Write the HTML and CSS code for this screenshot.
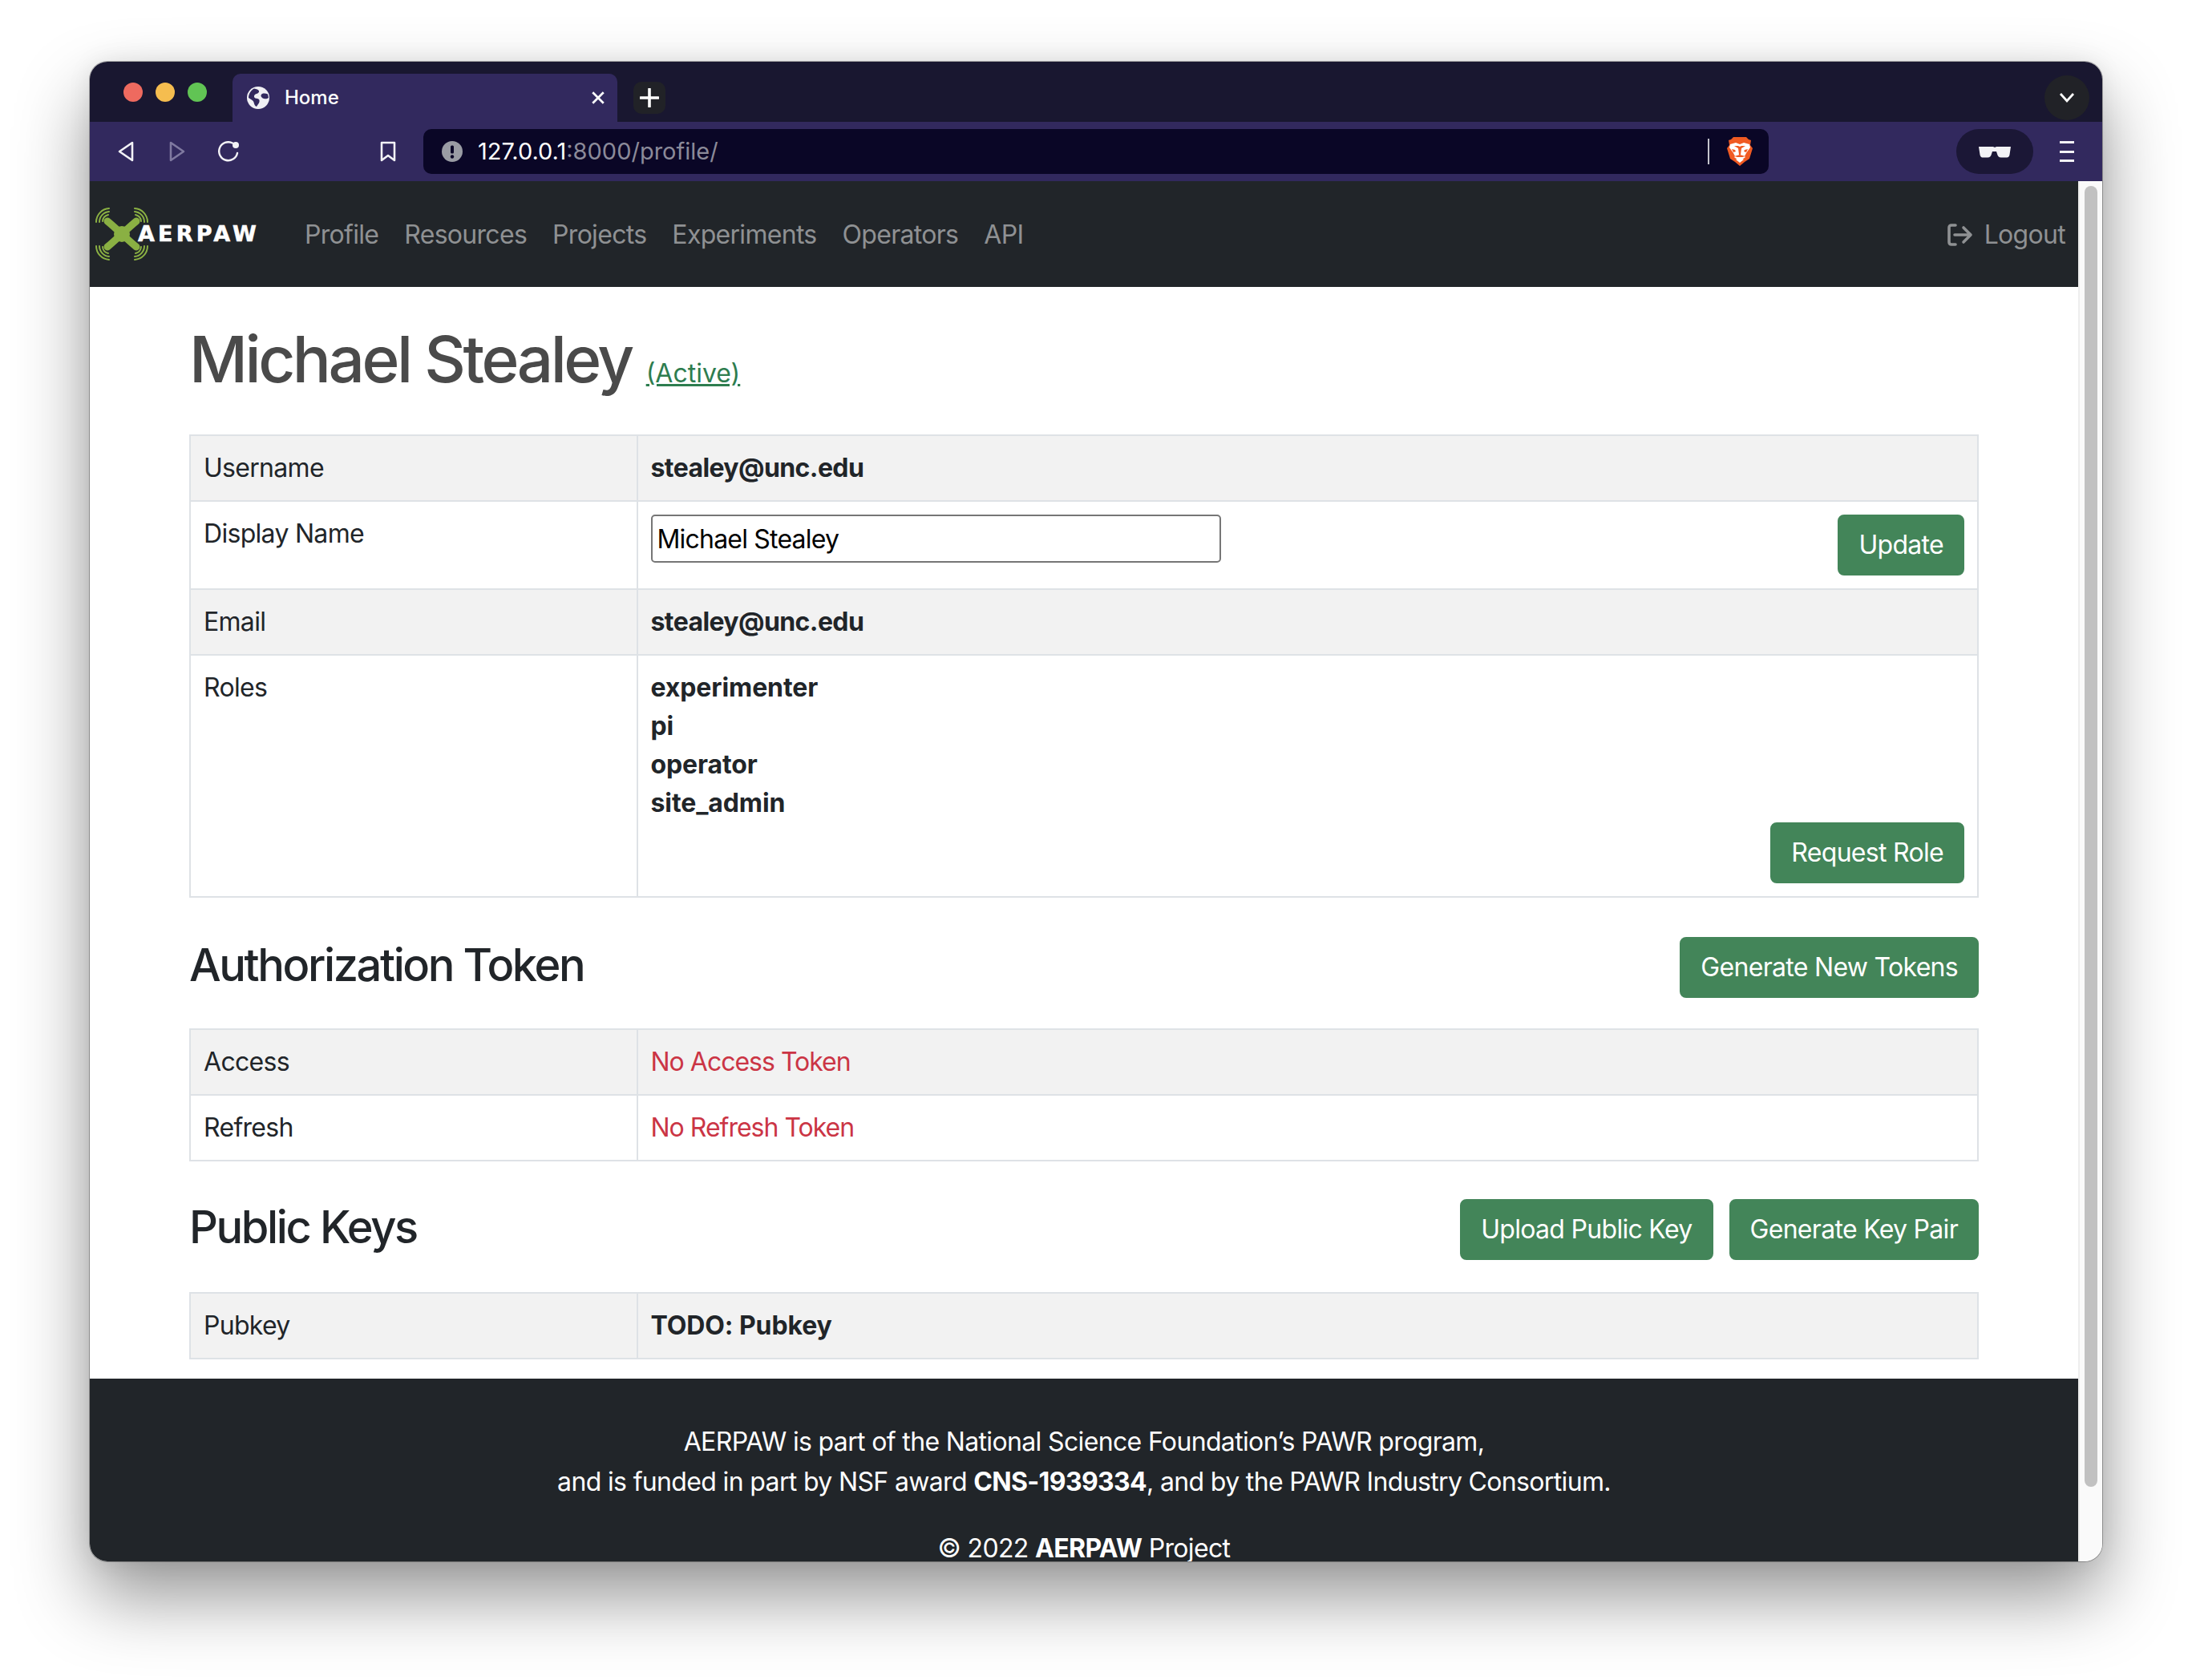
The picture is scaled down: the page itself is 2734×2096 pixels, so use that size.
FILE: index.html
```html
<!DOCTYPE html>
<html lang="en">
<head>
<meta charset="utf-8">
<title>Home</title>
<link rel="stylesheet" href="styles.css">
</head>
<body>
<div class="window">
  <div class="tabstrip">
    <span class="light red"></span><span class="light yellow"></span><span class="light green"></span>
    <div class="tab">
      <svg class="globe" viewBox="0 0 28 28"><circle cx="14" cy="14" r="14" fill="#f0f0f4"/><path d="M9 2.500c3 .5 5 1 6 3 .6 1.400-1 3-3 3.500-2 .6-3.500 2-3 4 .3 1.300 2 1.800 4 2 2 .3 3 2 2.500 4-.4 2-2 3.500-3.500 6-2-.5-3-3-3.500-5.500C8 17.500 5 16 2 14c0-5 3-9.500 7-11.500z" fill="#32295e"/><path d="M19 9c2-.6 4.500-.6 7 .5l1 4.500c-2 1.500-4 1.500-6 1-2-.6-3.500-2-3.500-3.500 0-1.200.5-2 1.500-2.500z" fill="#32295e"/></svg>
      <span class="tab-title">Home</span>
      <svg class="tab-x" viewBox="0 0 16 16"><path d="M2 2l12 12M14 2L2 14" stroke="#fff" stroke-width="2.400" fill="none"/></svg>
    </div>
    <div class="newtab"><svg viewBox="0 0 24 24"><path d="M12 1v22M1 12h22" stroke="#fff" stroke-width="3.600" fill="none" stroke-linecap="round"/></svg></div>
    <div class="chevron"><svg viewBox="0 0 20 14"><path d="M2 2l8 9 8-9" stroke="#fff" stroke-width="2.800" fill="none"/></svg></div>
  </div>
  <div class="toolbar">
    <svg class="tb-back" viewBox="0 0 20 26"><path d="M18 2v22L2 13z" stroke="#f2f2f6" stroke-width="2.600" fill="none" stroke-linejoin="round"/></svg>
    <svg class="tb-forward" viewBox="0 0 20 26"><path d="M2 2v22l16-11z" stroke="#7f79a0" stroke-width="2.600" fill="none" stroke-linejoin="round"/></svg>
    <svg class="tb-reload" viewBox="0 0 26 26"><path d="M18 2.500A11.500 11.500 0 1 0 24 15" stroke="#f2f2f6" stroke-width="2.400" fill="none" stroke-linecap="round"/><circle cx="22" cy="5" r="4" fill="#f2f2f6"/></svg>
    <svg class="tb-bookmark" viewBox="0 0 20 26"><path d="M2 2h16v22l-8-6-8 6z" stroke="#f2f2f6" stroke-width="2.600" fill="none" stroke-linejoin="round"/></svg>
    <div class="address">
      <svg class="alert" viewBox="0 0 26 26"><circle cx="13" cy="13" r="13" fill="#9a9ca4"/><rect x="11" y="5.500" width="4" height="10" rx="1.500" fill="#0a0626"/><circle cx="13" cy="19.500" r="2.200" fill="#0a0626"/></svg>
      <span class="url"><span class="url-host">127.0.0.1</span><span class="url-rest">:8000/profile/</span></span>
      <span class="addr-divider"></span>
      <svg class="brave" viewBox="0 0 32 36"><path d="M8 0h16l3 3 3 1-1 6 3 4-4 13-6 4-6 5-6-5-6-4L0 14l3-4-1-6 3-1z" fill="#f05a22"/><path d="M4 9l7-2 5 2 5-2 7 2 1 4-5 7-2 4 1 1-4 3h-6l-4-3 1-1-2-4-5-7z" fill="#fff"/><path d="M9 11h5l2 1 2-1h5l-5 3-1 8h-2l-1-8z" fill="#f05a22"/><path d="M6 15l4 1 1 2-3 1zM26 15l-4 1-1 2 3 1z" fill="#f05a22"/><path d="M9 24l7-2 7 2-4 1h-6z" fill="#f05a22"/><path d="M11 28l5-2 5 2-5 4z" fill="#fff"/></svg>
    </div>
    <div class="shades"><svg viewBox="0 0 40 15"><path d="M0 1h17c1 0 2 0 3 1 1-1 2-1 3-1h17l-1.500 10c-.3 2-1.500 3.500-3.500 3.500h-7c-3 0-4.500-2-5-4.500l-1-3h-5l-1 3c-.5 2.500-2 4.500-5 4.500H4.500C3 14.500 2 13 1.500 11z" fill="#f2f2f6"/></svg></div>
    <div class="menu"><span></span><span></span><span></span></div>
  </div>
  <div class="viewport">
    <div class="page">
      <nav class="navbar">
        <a class="brand">
          <svg class="drone" viewBox="0 0 66 66">
            <g fill="none" stroke="#8ab043" stroke-linecap="round">
              <path d="M15 17C26 26 40 40 51 49M51 17C40 26 26 40 15 49" stroke-width="9"/>
              <g stroke-width="2">
                <path d="M1 18A17 17 0 0 1 17 1M49 1A17 17 0 0 1 65 18M1 48A17 17 0 0 0 17 65M49 65A17 17 0 0 0 65 48"/>
                <path d="M5 18A13 13 0 0 1 17 5M49 5A13 13 0 0 1 61 18M5 48A13 13 0 0 0 17 61M49 61A13 13 0 0 0 61 48"/>
                <path d="M9 17A9 9 0 0 1 16 9M50 9A9 9 0 0 1 57 17M9 49A9 9 0 0 0 16 57M50 57A9 9 0 0 0 57 49"/>
              </g>
            </g>
            <circle cx="33" cy="33" r="10" fill="#8ab043"/>
          </svg>
          <span class="brand-text">AERPAW</span>
        </a>
        <a class="nav-link">Profile</a>
        <a class="nav-link">Resources</a>
        <a class="nav-link">Projects</a>
        <a class="nav-link">Experiments</a>
        <a class="nav-link">Operators</a>
        <a class="nav-link">API</a>
        <a class="nav-link logout">
          <svg class="logout-icon" viewBox="0 0 32 28"><path d="M10 2H5C3 2 2 3 2 5v18c0 2 1 3 3 3h5" stroke="#8f9193" stroke-width="3.600" fill="none" stroke-linecap="round"/><path d="M9 14h20M20 5l9 9-9 9" stroke="#8f9193" stroke-width="3.600" fill="none" stroke-linecap="round" stroke-linejoin="round"/></svg>
          Logout
        </a>
      </nav>
      <main class="content">
        <h1 class="title">Michael Stealey <a class="status">(Active)</a></h1>
        <table class="info">
          <tr class="odd"><td class="label">Username</td><td class="strong tight">stealey@unc.edu</td></tr>
          <tr>
            <td class="label">Display Name</td>
            <td><div class="name-row"><input class="name-input" type="text" value="Michael Stealey"><button class="btn">Update</button></div></td>
          </tr>
          <tr class="odd"><td class="label">Email</td><td class="strong tight">stealey@unc.edu</td></tr>
          <tr>
            <td class="label">Roles</td>
            <td class="strong">experimenter<br>pi<br>operator<br>site_admin
              <div class="role-row"><button class="btn">Request Role</button></div>
            </td>
          </tr>
        </table>
        <div class="section-head">
          <h2 class="section-title">Authorization Token</h2>
          <div class="actions"><button class="btn">Generate New Tokens</button></div>
        </div>
        <table class="info">
          <tr class="odd"><td class="label">Access</td><td class="danger">No Access Token</td></tr>
          <tr><td class="label">Refresh</td><td class="danger">No Refresh Token</td></tr>
        </table>
        <div class="section-head keys-head">
          <h2 class="section-title">Public Keys</h2>
          <div class="actions"><button class="btn">Upload Public Key</button><button class="btn">Generate Key Pair</button></div>
        </div>
        <table class="info">
          <tr class="odd"><td class="label">Pubkey</td><td class="strong">TODO: Pubkey</td></tr>
        </table>
      </main>
      <footer class="footer">
        <p class="foot-p">AERPAW is part of the National Science Foundation’s PAWR program,<br>and is funded in part by NSF award <b>CNS-1939334</b>, and by the PAWR Industry Consortium.</p>
        <p class="foot-copy">© 2022 <b>AERPAW</b> Project</p>
      </footer>
    </div>
    <div class="scrollbar"><div class="thumb"></div></div>
  </div>
</div>
</body>
</html>
```

FILE: styles.css
```css
* { box-sizing: border-box; }
html, body { margin: 0; padding: 0; background: #fff; }
body {
  width: 2734px;
  height: 2096px;
  padding: 77px 112px 0;
  overflow: hidden;
  font-family: Inter, "Liberation Sans", sans-serif;
  font-size: 32px;
  line-height: 48px;
  letter-spacing: -0.7px;
  color: #212529;
}
.window {
  width: 2510px;
  height: 1871px;
  border-radius: 22px;
  overflow: hidden;
  display: flex;
  flex-direction: column;
  box-shadow: 0 0 0 1px rgba(0,0,0,.28), 0 44px 90px rgba(0,0,0,.42), 0 0 30px rgba(0,0,0,.08);
}
.tabstrip {
  height: 75px;
  flex: none;
  background: #191730;
  display: flex;
  align-items: flex-start;
  padding-left: 42px;
}
.light { width: 24px; height: 24px; border-radius: 50%; margin-top: 26px; margin-right: 16px; flex: none; }
.red { background: #ee6a5f; }
.yellow { background: #f5bd4f; }
.green { background: #61c454; margin-right: 32px; }
.tab {
  width: 480px;
  height: 60px;
  margin-top: 15px;
  background: #32295e;
  border-radius: 10px 10px 0 0;
  display: flex;
  align-items: center;
  padding: 0 14px 0 18px;
}
.globe { width: 28px; height: 28px; flex: none; }
.tab-title { font-size: 24px; font-weight: 500; letter-spacing: 0; color: #fff; margin-left: 19px; flex: 1; line-height: 28px; }
.tab-x { width: 18px; height: 18px; margin-right: 1px; }
.newtab {
  width: 40px;
  height: 40px;
  margin: 25px 0 0 20px;
  background: #212227;
  border-radius: 10px;
  display: flex;
  align-items: center;
  justify-content: center;
}
.newtab svg { width: 24px; height: 24px; }
.chevron {
  width: 56px;
  height: 56px;
  margin: 17px 16px 0 auto;
  background: #212227;
  border-radius: 50%;
  display: flex;
  align-items: center;
  justify-content: center;
}
.chevron svg { width: 20px; height: 14px; }
.toolbar {
  height: 74px;
  flex: none;
  background: #32295e;
  display: flex;
  align-items: center;
  padding-left: 35px;
}
.tb-back, .tb-forward, .tb-bookmark { width: 20px; height: 26px; flex: none; }
.tb-forward { margin-left: 44px; }
.tb-reload { width: 26px; height: 26px; margin-left: 41px; flex: none; }
.tb-bookmark { margin-left: 176px; }
.address {
  width: 1678px;
  height: 56px;
  margin-left: 34px;
  background: #0a0626;
  border-radius: 10px;
  display: flex;
  align-items: center;
  padding-left: 23px;
  flex: none;
}
.alert { width: 26px; height: 26px; flex: none; }
.url { margin-left: 19px; font-size: 29px; letter-spacing: 0; line-height: 40px; flex: 1; }
.url-host { color: #fff; }
.url-rest { color: #8b8a99; }
.addr-divider { width: 2px; height: 32px; background: #c4c4cc; }
.brave { width: 32px; height: 36px; margin: 0 20px 0 22px; flex: none; }
.shades {
  width: 96px;
  height: 56px;
  margin-left: 234px;
  background: #1b1736;
  border-radius: 28px;
  display: flex;
  align-items: center;
  justify-content: center;
  flex: none;
}
.shades svg { width: 40px; height: 15px; }
.menu { width: 18px; height: 26px; margin-left: 33px; display: flex; flex-direction: column; justify-content: space-between; flex: none; }
.menu span { height: 3px; background: #f2f2f6; display: block; }
.viewport { flex: 1; display: flex; min-height: 0; }
.page { width: 2480px; flex: none; display: flex; flex-direction: column; min-height: 0; overflow: hidden; background: #fff; }
.scrollbar { flex: 1; background: #fafafa; border-left: 2px solid #eee; padding: 6px 6px 0 6px; }
.thumb { width: 16px; height: 1623px; background: #c1c1c1; border-radius: 8px; }
.navbar {
  height: 132px;
  flex: none;
  background: #212529;
  display: flex;
  align-items: center;
  padding-left: 7px;
}
.brand { display: flex; align-items: center; width: 245px; flex: none; }
.drone { width: 66px; height: 66px; flex: none; }
.brand-text {
  margin-left: -13px;
  font-family: "DejaVu Sans", sans-serif;
  font-weight: 700;
  font-size: 27px;
  letter-spacing: 4.2px;
  line-height: 30px;
  color: #fff;
  -webkit-text-stroke: .6px #fff;
  position: relative;
}
.nav-link { color: #8f9193; padding: 2px 16px 0; }
.logout { margin-left: auto; display: flex; align-items: center; }
.logout-icon { width: 32px; height: 28px; margin-right: 14px; }
.content { padding: 42px 124px 24px; flex: none; }
.title { margin: 0 0 28px; font-size: 80px; line-height: 96px; font-weight: 500; letter-spacing: -3.5px; color: #4a4a4a; }
.status { font-size: 32px; font-weight: 400; letter-spacing: 0; color: #2e7d4f; text-decoration: underline; }
.info { width: 100%; border-collapse: collapse; table-layout: fixed; }
.info td { border: 2px solid #dee2e6; padding: 16px; vertical-align: top; }
.odd td { background: #f2f2f2; }
.label { width: 25%; }
.strong { font-weight: 700; letter-spacing: -0.1px; }
.tight { letter-spacing: -0.6px; }
.danger { color: #cb3545; letter-spacing: -1px; }
.name-row { display: flex; justify-content: space-between; align-items: flex-start; }
.name-input {
  width: 711px;
  height: 60px;
  border: 2px solid #767676;
  border-radius: 5px;
  padding: 0 6px;
  font: 400 32px Inter, sans-serif;
  letter-spacing: -0.8px;
  color: #000;
  background: #fff;
}
.role-row { display: flex; justify-content: flex-end; font-weight: 400; letter-spacing: -0.7px; }
.btn {
  height: 76px;
  padding: 12px 24px;
  border: 2px solid #438559;
  border-radius: 8px;
  background: #438559;
  color: #fff;
  font: 400 32px/48px Inter, sans-serif;
  letter-spacing: -0.7px;
}
.section-head { display: flex; justify-content: space-between; align-items: center; margin: 49px 0 38px; }
.keys-head { margin: 47px 0 40px; }
.section-title { margin: 0; padding-bottom: 6px; font-size: 56px; line-height: 67px; font-weight: 500; letter-spacing: -2.4px; color: #212529; }
.actions { display: flex; gap: 20px; }
.footer { flex: 1; background: #212529; color: #fff; text-align: center; padding-top: 54px; min-height: 0; letter-spacing: -0.65px; }
.foot-p { margin: 0 0 42px; line-height: 50px; }
.foot-copy { margin: 0; line-height: 32px; }
```
